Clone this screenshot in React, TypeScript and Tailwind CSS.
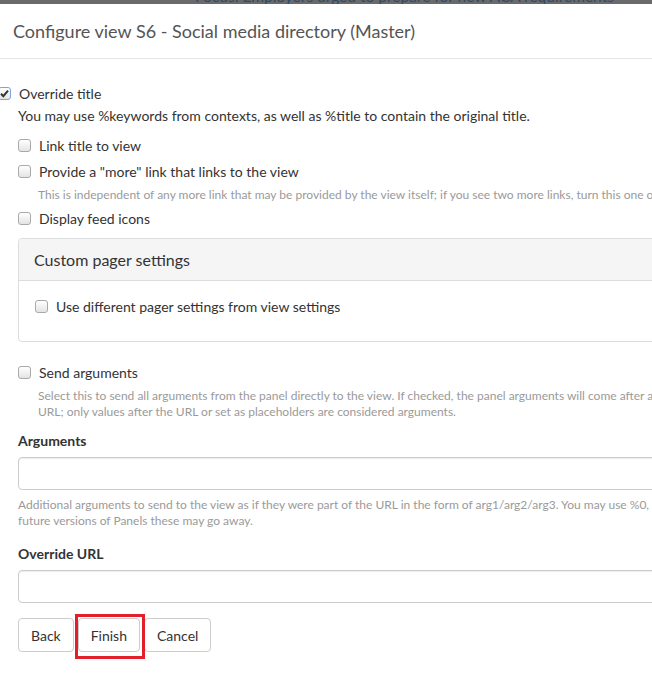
import type { ReactNode } from 'react';

function Box({ checked = false }: { checked?: boolean }) {
  return (
    <span
      className={
        'relative inline-block w-[13px] h-[13px] shrink-0 rounded-[3px] border bg-gradient-to-b from-white to-[#e4e4e4] ' +
        (checked ? 'border-[#7aa7d9]' : 'border-[#a9a9a9]')
      }
    >
      {checked && (
        <svg viewBox="0 0 13 13" className="absolute left-[-1px] top-[-1px] w-[13px] h-[13px]">
          <path d="M3 6.8 L5.3 9.2 L10 3.6" fill="none" stroke="#333" strokeWidth="2" />
        </svg>
      )}
    </span>
  );
}

function Check({ label, className = '' }: { label: string; className?: string }) {
  return (
    <div className={'flex items-center h-[20px] gap-[8px] ' + className}>
      <Box />
      <span>{label}</span>
    </div>
  );
}

function Help({ children, className = '' }: { children: ReactNode; className?: string }) {
  return <div className={'text-[12px] leading-[16px] text-[#9a9a9a] whitespace-nowrap ' + className}>{children}</div>;
}

export default function App() {
  return (
    <div className="w-[652px] h-[673px] overflow-hidden bg-white text-[14px] text-[#333]" style={{ fontFamily: 'Lato, "Open Sans", sans-serif' }}>
      {/* page behind the modal */}
      <div className="h-[4px] bg-[#6a6a6a] overflow-hidden">
        <div className="ml-[195px] mt-[-13px] text-[15.5px] leading-[18px] text-[#2f4b68] whitespace-nowrap">
          Focus: Employers urged to prepare for new ACA requirements
        </div>
      </div>

      <div className="w-[900px]">
        {/* header */}
        <div className="h-[55px] border-b border-[#e5e5e5] pl-[13px] pt-[15px]">
          <h4 className="text-[18px] leading-[24px] text-[#555]">Configure view S6 - Social media directory (Master)</h4>
        </div>

        <div className="pl-[18px]">
          <div className="flex items-center h-[20px] mt-[24px] ml-[-20px] gap-[8px]">
            <Box checked />
            <span>Override title</span>
          </div>
          <div className="h-[20px] leading-[20px] mt-[3px]">
            You may use %keywords from contexts, as well as %title to contain the original title.
          </div>

          <Check label="Link title to view" className="mt-[9px]" />
          <Check label='Provide a "more" link that links to the view' className="mt-[6px]" />
          <Help className="pl-[20px] mt-[6px]">
            This is independent of any more link that may be provided by the view itself; if you see two more links, turn this one off.
          </Help>
          <Check label="Display feed icons" className="mt-[5px]" />

          {/* pager panel */}
          <div className="mt-[10px] border border-[#ddd] rounded-[4px]">
            <div className="h-[42px] bg-[#f5f5f5] border-b border-[#ddd] rounded-t-[4px] pl-[15px] flex items-center text-[16px]">
              Custom pager settings
            </div>
            <Check label="Use different pager settings from view settings" className="ml-[16px] mt-[15px] mb-[25px]" />
          </div>

          <Check label="Send arguments" className="mt-[20px]" />
          <Help className="pl-[20px] mt-[6px]">
            <div>
              Select this to send all arguments from the panel directly to the view. If checked, the panel arguments will come after any context arguments above and precede any additional
            </div>
            <div>URL; only values after the URL or set as placeholders are considered arguments.</div>
          </Help>

          <div className="mt-[11px] h-[20px] leading-[20px] font-bold">Arguments</div>
          <div className="mt-[6px] h-[33px] border border-[#ccc] rounded-[4px] shadow-[inset_0_1px_1px_rgba(0,0,0,0.075)]" />
          <Help className="mt-[7px]">
            <div>
              Additional arguments to send to the view as if they were part of the URL in the form of arg1/arg2/arg3. You may use %0, %1, ..., %N to grab arguments from the URL. In
            </div>
            <div>future versions of Panels these may go away.</div>
          </Help>

          <div className="mt-[15px] h-[20px] leading-[20px] font-bold">Override URL</div>
          <div className="mt-[6px] h-[33px] border border-[#ccc] rounded-[4px] shadow-[inset_0_1px_1px_rgba(0,0,0,0.075)]" />

          {/* actions */}
          <div className="mt-[15px] flex gap-[4px]">
            <button className="h-[34px] px-[12px] border border-[#ccc] rounded-[4px] bg-white text-[#333]">Back</button>
            <span className="relative">
              <button className="h-[34px] px-[12px] border border-[#ccc] rounded-[4px] bg-white text-[#333]">Finish</button>
              <span className="absolute left-[-3px] right-[-5px] top-[-4px] bottom-[-7px] border-[3px] border-[#e0202a]" />
            </span>
            <button className="h-[34px] px-[12px] border border-[#ccc] rounded-[4px] bg-white text-[#333]">Cancel</button>
          </div>
        </div>
      </div>
    </div>
  );
}
